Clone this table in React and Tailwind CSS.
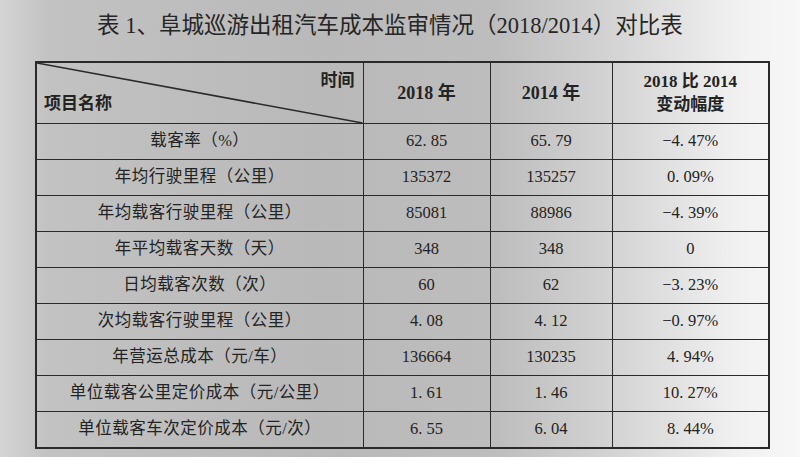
import React from 'react';

const rows = [
  ['载客率（%）', '62. 85', '65. 79', '−4. 47%'],
  ['年均行驶里程（公里）', '135372', '135257', '0. 09%'],
  ['年均载客行驶里程（公里）', '85081', '88986', '−4. 39%'],
  ['年平均载客天数（天）', '348', '348', '0'],
  ['日均载客次数（次）', '60', '62', '−3. 23%'],
  ['次均载客行驶里程（公里）', '4. 08', '4. 12', '−0. 97%'],
  ['年营运总成本（元/车）', '136664', '130235', '4. 94%'],
  ['单位载客公里定价成本（元/公里）', '1. 61', '1. 46', '10. 27%'],
  ['单位载客车次定价成本（元/次）', '6. 55', '6. 04', '8. 44%'],
];

const serif = "font-['Liberation_Serif','Noto_Sans_CJK_SC',serif]";

export default function App() {
  return (
    <div
      className={`w-[800px] h-[457px] overflow-hidden text-[#232323] ${serif} bg-[linear-gradient(90deg,#d4d4d4_0%,#c2c2c2_6%,#b9b9b9_40%,#bdbdbd_62%,#d6d6d6_78%,#f2f2f2_93%,#f7f7f7_100%)]`}
    >
      {/* title */}
      <div className="pt-[12px] pl-[97px] text-[22.5px] leading-[28px] text-[#262626]">
        表 1、阜城巡游出租汽车成本监审情况（2018/2014）对比表
      </div>

      <table className="ml-[35px] mt-[21px] w-[733px] border-collapse border-[2px] border-[#2a2a2a] table-fixed">
        <colgroup>
          <col className="w-[327px]" />
          <col className="w-[127px]" />
          <col className="w-[122px]" />
          <col className="w-[157px]" />
        </colgroup>
        <thead>
          <tr className="h-[60px]">
            <th className="relative border-[1.5px] border-[#2a2a2a] p-0 font-normal">
              <svg className="absolute inset-0 w-full h-full" viewBox="0 0 100 100" preserveAspectRatio="none">
                <line x1="0" y1="0" x2="100" y2="100" stroke="#2a2a2a" strokeWidth="1.5" vectorEffect="non-scaling-stroke" />
              </svg>
              <div className="flex flex-col h-[60px] justify-between px-[7px] py-[5px] font-['Noto_Sans_CJK_SC',sans-serif] font-bold text-[17px] leading-[22px]">
                <span className="self-end pr-[1px]">时间</span>
                <span className="self-start pb-[5px]">项目名称</span>
              </div>
            </th>
            <th className="border-[1.5px] border-[#2a2a2a] text-[18px] font-semibold">2018 年</th>
            <th className="border-[1.5px] border-[#2a2a2a] text-[18px] font-semibold">2014 年</th>
            <th className="border-[1.5px] border-[#2a2a2a] text-[17px] font-semibold leading-[23px]">
              2018 比 2014
              <br />
              变动幅度
            </th>
          </tr>
        </thead>
        <tbody>
          {rows.map((r) => (
            <tr key={r[0]} className="h-[36px]">
              <td className="border-[1.5px] border-[#2a2a2a] text-center text-[16.5px] tracking-[0.5px]">{r[0]}</td>
              <td className="border-[1.5px] border-[#2a2a2a] text-center text-[16.5px]">{r[1]}</td>
              <td className="border-[1.5px] border-[#2a2a2a] text-center text-[16.5px]">{r[2]}</td>
              <td className="border-[1.5px] border-[#2a2a2a] text-center text-[16.5px]">{r[3]}</td>
            </tr>
          ))}
        </tbody>
      </table>
    </div>
  );
}
